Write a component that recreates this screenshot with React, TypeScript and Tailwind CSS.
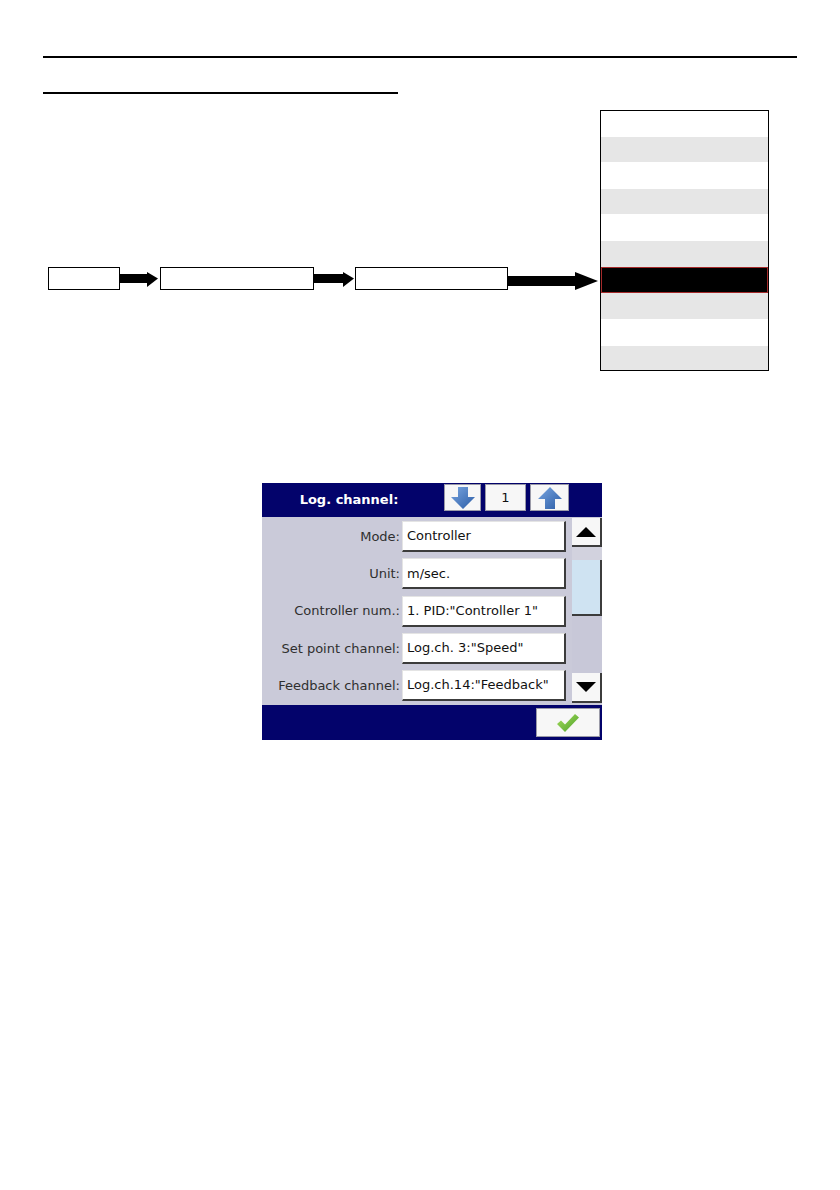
import React from "react";

const rows: { h: string; c: string }[] = [
  { h: "h-[26px]", c: "bg-white" },
  { h: "h-[25px]", c: "bg-[#e6e6e6]" },
  { h: "h-[27px]", c: "bg-white" },
  { h: "h-[25px]", c: "bg-[#e6e6e6]" },
  { h: "h-[27px]", c: "bg-white" },
  { h: "h-[26px]", c: "bg-[#e6e6e6]" },
  { h: "h-[26px]", c: "bg-black border border-[#a52a2a]" },
  { h: "h-[26px]", c: "bg-[#e6e6e6]" },
  { h: "h-[27px]", c: "bg-white" },
  { h: "h-[24px]", c: "bg-[#e6e6e6]" },
];

const fields: [string, string][] = [
  ["Mode:", "Controller"],
  ["Unit:", "m/sec."],
  ["Controller num.:", '1. PID:"Controller 1"'],
  ["Set point channel:", 'Log.ch. 3:"Speed"'],
  ["Feedback channel:", 'Log.ch.14:"Feedback"'],
];

function BlueArrow({ up }: { up?: boolean }) {
  const id = up ? "gu" : "gd";
  return (
    <svg width="24" height="22" viewBox="0 0 24 22">
      <defs>
        <linearGradient id={id} x1="0" y1="0" x2="1" y2="1">
          <stop offset="0" stopColor="#7aa6e0" />
          <stop offset="1" stopColor="#2a5ca6" />
        </linearGradient>
      </defs>
      <polygon
        fill={`url(#${id})`}
        points={up ? "12,0 24,12 17,12 17,22 7,22 7,12 0,12" : "7,0 17,0 17,10 24,10 12,22 0,10 7,10"}
      />
    </svg>
  );
}

export default function App() {
  return (
    <div className="w-[840px] h-[1190px] bg-white overflow-hidden">
      <div className="pt-[56px] pl-[43px]">
        <div className="w-[754px] h-[2px] bg-black" />
        <div className="mt-[34px] w-[355px] h-[2px] bg-black" />
      </div>

      <div className="mt-[16px] flex pl-[48px]">
        <div className="pt-[157px] flex items-start">
          <div className="w-[72px] h-[23px] border border-black bg-white" />
          <svg width="40" height="23" viewBox="0 0 40 23" className="block">
            <rect x="0" y="7" width="28" height="9" fill="#000" />
            <polygon points="27,5 38,11.5 27,20" fill="#000" />
          </svg>
          <div className="w-[154px] h-[23px] border border-black bg-white" />
          <svg width="41" height="23" viewBox="0 0 41 23" className="block">
            <rect x="0" y="7" width="30" height="9" fill="#000" />
            <polygon points="29,5 40,11.5 29,20" fill="#000" />
          </svg>
          <div className="w-[153px] h-[23px] border border-black bg-white" />
          <svg width="92" height="26" viewBox="0 0 92 26" className="block">
            <rect x="0" y="9" width="68" height="10" fill="#000" />
            <polygon points="67,5 90,14 67,23" fill="#000" />
          </svg>
        </div>
        <div className="w-[169px] border border-black flex flex-col">
          {rows.map((r, i) => (
            <div key={i} className={`${r.h} ${r.c}`} />
          ))}
        </div>
      </div>

      <div
        className="mt-[112px] ml-[262px] w-[340px] flex flex-col"
        style={{ fontFamily: '"DejaVu Sans", Verdana, sans-serif' }}
      >
        <div className="h-[34px] bg-[#03036b] flex items-start">
          <div className="w-[174px] h-full flex items-center justify-center text-white font-bold text-[13px]">
            Log. channel:
          </div>
          <div className="ml-[8px] pt-[1px] flex gap-[4px]">
            <div className="w-[37px] h-[27px] bg-[#f7f7f7] border border-[#9a9aa8] flex items-center justify-center">
              <BlueArrow />
            </div>
            <div className="w-[41px] h-[27px] bg-[#f7f7f7] border border-[#9a9aa8] flex items-center justify-center text-[13px] text-[#111]">
              1
            </div>
            <div className="w-[39px] h-[27px] bg-[#f7f7f7] border border-[#9a9aa8] flex items-center justify-center">
              <BlueArrow up />
            </div>
          </div>
        </div>

        <div className="h-[188px] bg-[#cacad9] flex">
          <div className="pt-[4px] flex flex-col gap-[6.25px]">
            {fields.map(([l, v]) => (
              <div key={l} className="flex items-center h-[31px]">
                <div className="w-[140px] pr-[2px] text-right text-[13px] text-[#2f2f2f] whitespace-nowrap">
                  {l}
                </div>
                <div className="w-[164px] h-[31px] bg-white border-t border-l border-[#e4e4e4] border-r-2 border-b-2 border-r-[#3c3c3c] border-b-[#3c3c3c] flex items-center pl-[4px] text-[13px] text-[#111] whitespace-nowrap">
                  {v}
                </div>
              </div>
            ))}
          </div>
          <div className="ml-[6px] pt-[1px] w-[30px] flex flex-col">
            <div className="h-[29px] bg-[#f7f7f7] border-r-2 border-b-2 border-[#3c3c3c] flex items-center justify-center">
              <svg width="20" height="10" viewBox="0 0 20 10">
                <polygon points="10,0 20,10 0,10" fill="#000" />
              </svg>
            </div>
            <div className="h-[126px] bg-[#c8c8d8] flex flex-col">
              <div className="h-[13px] bg-[#d2d2de]" />
              <div className="h-[56px] bg-[#cfe3f2] border-r-2 border-b-2 border-[#3c3c3c]" />
            </div>
            <div className="h-[30px] bg-[#f7f7f7] border-r-2 border-b-2 border-[#3c3c3c] flex items-center justify-center">
              <svg width="20" height="10" viewBox="0 0 20 10">
                <polygon points="0,0 20,0 10,10" fill="#000" />
              </svg>
            </div>
          </div>
        </div>

        <div className="h-[35px] bg-[#03036b] flex items-start">
          <div className="ml-auto mr-[2px] mt-[3px] w-[64px] h-[29px] bg-[#f7f7f7] border border-[#9a9aa8] flex items-center justify-center">
            <svg width="22" height="18" viewBox="0 0 22 18">
              <defs>
                <linearGradient id="gc" x1="0" y1="0" x2="1" y2="1">
                  <stop offset="0" stopColor="#a8df5e" />
                  <stop offset="1" stopColor="#4a9e28" />
                </linearGradient>
              </defs>
              <polygon points="0,10 4,6.5 8,10.5 18,0 22,3.5 8,18" fill="url(#gc)" />
            </svg>
          </div>
        </div>
      </div>
    </div>
  );
}
